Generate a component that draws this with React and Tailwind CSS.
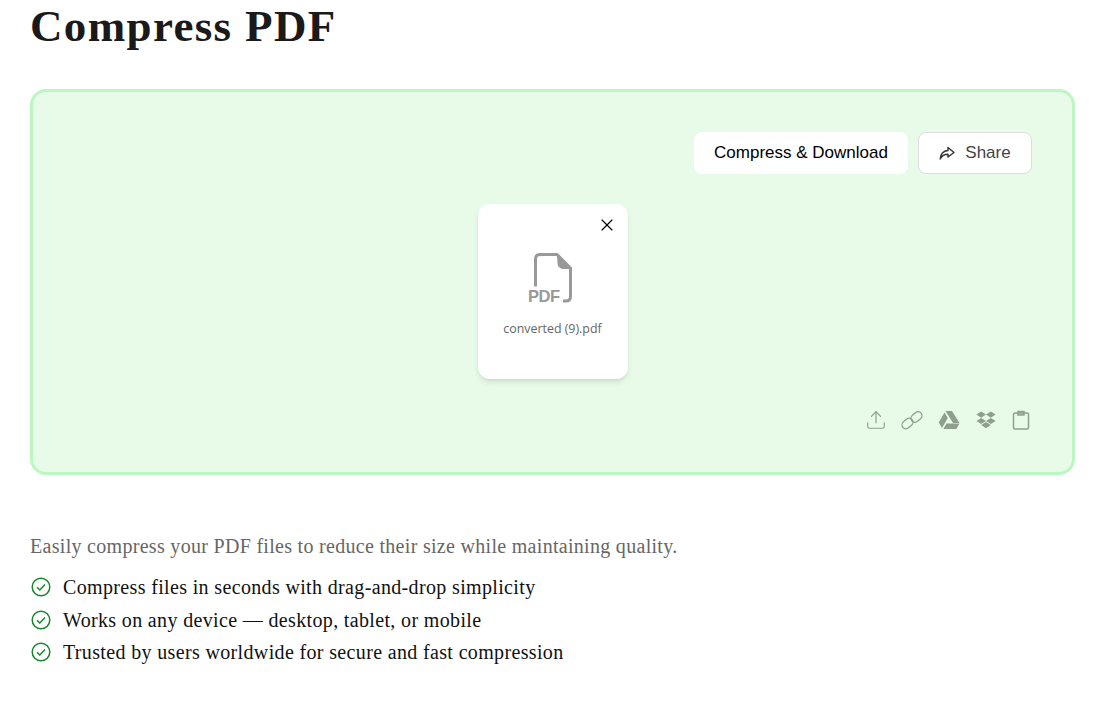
import { X, Upload } from "lucide-react";

const serif = "font-['Liberation_Serif',serif]";

const bullets = [
  "Compress files in seconds with drag-and-drop simplicity",
  "Works on any device — desktop, tablet, or mobile",
  "Trusted by users worldwide for secure and fast compression",
];

const PdfIcon = () => (
  <svg width="50" height="52" viewBox="0 0 50 52" fill="none" className="block">
    <path d="M7.5 33.5V6C7.5 3 9 1.5 12 1.5H29L42.5 15V43.5C42.5 46.5 41 48 38 48H35" stroke="#999999" strokeWidth="3" />
    <path d="M29 1.5L44 16H36C32 16 29.5 13.5 29.5 10Z" fill="#999999" />
    <text x="0" y="49" fontFamily="'Liberation Sans', sans-serif" fontWeight="700" fontSize="16.5" letterSpacing="-0.5" fill="#999999">PDF</text>
  </svg>
);

const ShareIcon = () => (
  <svg width="16" height="16" viewBox="0 0 16 16" fill="none" stroke="#333333" strokeWidth="1.4" strokeLinejoin="round">
    <path d="M9 2.5L15 7.5L9 12V9.3C5.5 9.3 3 10.5 1.2 14C1.5 9.5 4 6 9 5.5Z" />
  </svg>
);

const ChainIcon = () => (
  <svg width="22" height="22" viewBox="0 0 22 22" fill="none" stroke="#8f9f8f" strokeWidth="1.3" className="-mr-[1px]">
    <rect x="0.5" y="10.5" width="12" height="8" rx="4" transform="rotate(-40 6.5 14.5)" />
    <rect x="9.5" y="4" width="12" height="8" rx="4" transform="rotate(-40 15.5 8)" />
  </svg>
);

const DriveIcon = () => (
  <svg width="22" height="20" viewBox="0 0 22 20" fill="#8f9f8f">
    <path d="M7.5 1H14L21.5 13H15Z" />
    <path d="M6.5 2.5L9.8 8L4 18L0.7 12.6Z" />
    <path d="M8.5 13.5H21.5L18.3 19H5.3Z" />
  </svg>
);

const DropboxIcon = () => (
  <svg width="20" height="18" viewBox="0 0 20 18" fill="#8f9f8f">
    <path d="M5.2 0.5L10 3.6L5.2 6.7L0.4 3.6Z" />
    <path d="M14.8 0.5L19.6 3.6L14.8 6.7L10 3.6Z" />
    <path d="M5.2 6.9L10 10L5.2 13.1L0.4 10Z" />
    <path d="M14.8 6.9L19.6 10L14.8 13.1L10 10Z" />
    <path d="M10 11L14.8 14L10 17.2L5.2 14Z" />
  </svg>
);

const ClipboardIcon = () => (
  <svg width="18" height="20" viewBox="0 0 18 20" fill="none" stroke="#8f9f8f" strokeWidth="1.5">
    <rect x="1.5" y="3" width="15" height="16" rx="1.5" />
    <path d="M6 1.5H12V5H6Z" fill="#8f9f8f" fillOpacity="0.3" />
  </svg>
);

const CheckIcon = () => (
  <svg width="22" height="22" viewBox="0 0 22 22" fill="none" stroke="#15862a" strokeWidth="1.5" className="shrink-0">
    <circle cx="11" cy="11" r="8.8" />
    <path d="M7 11.3L9.8 14L15 8.6" />
  </svg>
);

const App = () => {
  return (
    <div className="min-h-[706px] bg-white px-[30px] overflow-hidden">
      <h1 className={`${serif} text-[45px] leading-[53px] font-bold tracking-[1.35px] text-[#1a1a1a]`}>Compress PDF</h1>

      <div className="mt-[36px] h-[386px] rounded-[16px] border-[3px] border-[#bbf7c0] bg-[#e8fbe8] p-10">
        <div className="flex justify-end gap-[10px]">
          <button className="h-[42px] w-[214px] rounded-lg bg-white font-['Liberation_Sans',sans-serif] text-[17px] text-black">
            Compress &amp; Download
          </button>
          <button className="flex h-[42px] w-[114px] items-center justify-center gap-[10px] rounded-lg border border-[#dddddd] bg-white font-['Liberation_Sans',sans-serif] text-[17px] text-[#444444]">
            <ShareIcon />
            Share
          </button>
        </div>

        <div className="relative mx-auto mt-[30px] flex h-[175px] w-[150px] flex-col items-center rounded-xl bg-white pt-[49px] shadow-md">
          <X size={20} strokeWidth={1.4} className="absolute right-[11px] top-[11px] text-black" />
          <PdfIcon />
          <p className="mt-[15px] font-['Open_Sans',sans-serif] text-[12.4px] text-[#666666]">converted (9).pdf</p>
        </div>

        <div className="mt-[29px] flex h-6 items-center justify-end gap-4 pr-[2px]">
          <Upload size={22} strokeWidth={1.3} className="-mr-[2px] text-[#8f9f8f]" />
          <ChainIcon />
          <DriveIcon />
          <DropboxIcon />
          <ClipboardIcon />
        </div>
      </div>

      <p className={`${serif} mt-[57px] text-[20px] leading-7 tracking-[0.3px] text-[#666666]`}>
        Easily compress your PDF files to reduce their size while maintaining quality.
      </p>

      <ul className="mt-[13px] flex flex-col gap-[4px]">
        {bullets.map((item) => (
          <li key={item} className={`${serif} flex h-[28.5px] items-center gap-[11px] text-[20px] tracking-[0.35px] text-[#111111]`}>
            <CheckIcon />
            {item}
          </li>
        ))}
      </ul>
    </div>
  );
};

export default App;
